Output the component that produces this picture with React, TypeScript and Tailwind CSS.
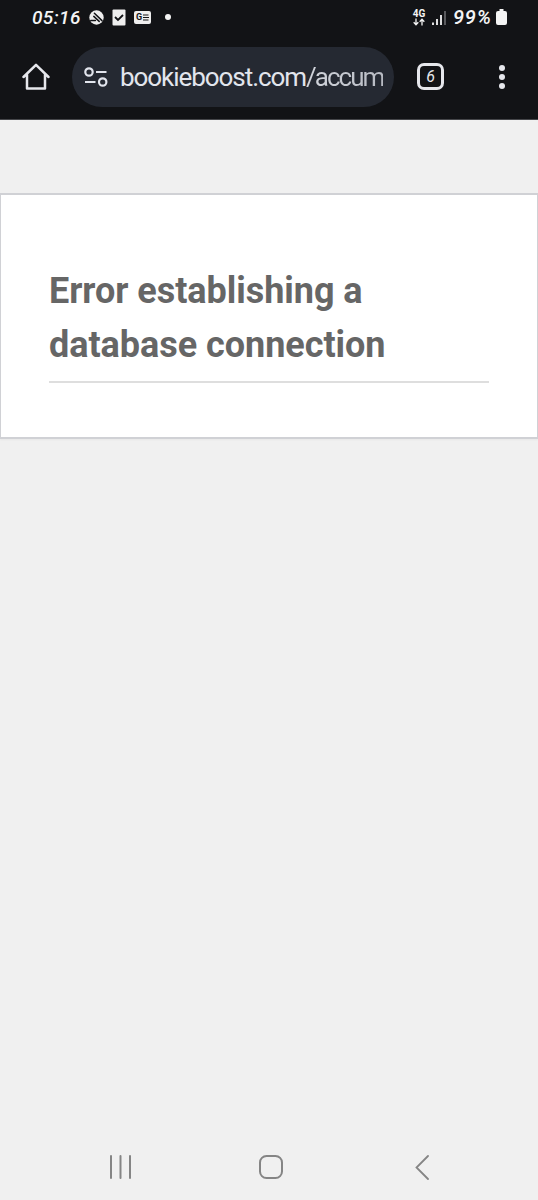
function StatusBar() {
    return (
        <div className="flex h-[34px] items-center pl-[32px] pr-[31px] text-[#f4f4f4]">
            <span className="w-[48px] whitespace-nowrap font-['Roboto',sans-serif] text-[19px] font-medium italic leading-none tracking-[0.4px]">
                05:16
            </span>
            <svg className="ml-[9px] shrink-0" width="15" height="15" viewBox="0 0 15 15">
                <circle cx="7.5" cy="7.5" r="7.2" fill="#eeeeee" />
                <path
                    d="M5.4 3.2 13 10.6M4.8 6.4l5.4 5M1.8 10.4h4.6"
                    fill="none"
                    stroke="#121316"
                    strokeWidth="1.5"
                    strokeLinecap="round"
                />
            </svg>
            <svg className="ml-[8px] shrink-0" width="14" height="17" viewBox="0 0 14 17">
                <rect x="0.5" y="0.5" width="13" height="16" rx="1" fill="#eeeeee" />
                <path d="m3 8 3 3 5-5" fill="none" stroke="#121316" strokeWidth="1.8" />
            </svg>
            <div className="ml-[8px] flex h-[13px] w-[17px] shrink-0 items-center justify-center gap-px rounded-[2px] bg-[#eeeeee]">
                <span className="font-['Roboto',sans-serif] text-[9px] font-bold leading-none text-[#121316]">G</span>
                <svg width="6" height="7" viewBox="0 0 6 7">
                    <path d="M0 1h5.5M0 3.5h6M0 6h5.5" stroke="#121316" strokeWidth="1.2" />
                </svg>
            </div>
            <div className="ml-[14px] size-[6px] shrink-0 rounded-full bg-[#f4f4f4]" />

            <div className="ml-auto flex w-[14px] flex-col items-center">
                <span className="font-['Roboto',sans-serif] text-[10px] font-bold leading-[9px]">4G</span>
                <svg width="12" height="8" viewBox="0 0 12 8">
                    <path
                        d="M3 0.5v6M0.7 4.3 3 6.8l2.3-2.5M9 7.5v-6M6.7 3.7 9 1.2l2.3 2.5"
                        fill="none"
                        stroke="#f4f4f4"
                        strokeWidth="1.3"
                    />
                </svg>
            </div>
            <svg className="ml-[6px] mt-px" width="14" height="16" viewBox="0 0 14 16">
                <path d="M1 12.5V15M5 9v6M9 5v10" stroke="#f4f4f4" strokeWidth="1.8" />
                <path d="M13 1v14" stroke="#6c6d70" strokeWidth="1.6" />
            </svg>
            <span className="ml-[7px] w-[42px] whitespace-nowrap font-['Roboto',sans-serif] text-[20px] font-medium italic leading-none tracking-[0.8px]">
                99%
            </span>
            <svg className="ml-px" width="11" height="16" viewBox="0 0 11 16">
                <path
                    d="M3.5 0h4v2H9a2 2 0 0 1 2 2v10a2 2 0 0 1-2 2H2a2 2 0 0 1-2-2V4a2 2 0 0 1 2-2h1.5z"
                    fill="#f4f4f4"
                />
            </svg>
        </div>
    );
}

function AddressBar() {
    return (
        <div className="flex h-[85px] items-center">
            <svg className="ml-[22px] shrink-0" width="28" height="28" viewBox="0 0 28 28">
                <path
                    d="M1.5 14 14 1.8 26.5 14M5 11.5V25.5H23V11.5"
                    fill="none"
                    stroke="#e6e7ec"
                    strokeWidth="2.5"
                    strokeLinejoin="round"
                    strokeLinecap="round"
                />
            </svg>
            <div className="ml-[22px] flex h-[60px] w-[322px] shrink-0 items-center rounded-full bg-[#252932] pl-[12px]">
                <svg className="shrink-0" width="24" height="20" viewBox="0 0 24 20">
                    <g fill="none" stroke="#e2e5ed" strokeWidth="2.2">
                        <circle cx="5" cy="5" r="3.7" />
                        <path d="M12 5h10.5M1 15h10.5" />
                        <circle cx="18.7" cy="15" r="3.7" />
                    </g>
                </svg>
                <div className="ml-[12px] w-[264px] overflow-hidden whitespace-nowrap font-['Roboto',sans-serif] text-[26px] leading-[36px] tracking-[-1.05px] text-[#e2e5ed]">
                    bookieboost.com
                    <span className="bg-gradient-to-r from-[#d3d6dd] to-[#b7bac2] bg-clip-text tracking-[-2px] text-transparent">
                        /accum
                    </span>
                </div>
            </div>
            <div className="ml-[23px] flex h-[27px] w-[27px] shrink-0 items-center justify-center rounded-[7px] border-3 border-[#e6e7ec] font-['Roboto',sans-serif] text-[16px] italic leading-none text-[#e6e7ec]">
                6
            </div>
            <div className="ml-[55px] flex flex-col gap-[3px]">
                <div className="size-[6px] rounded-full bg-[#e6e7ec]" />
                <div className="size-[6px] rounded-full bg-[#e6e7ec]" />
                <div className="size-[6px] rounded-full bg-[#e6e7ec]" />
            </div>
        </div>
    );
}

function NavigationBar() {
    return (
        <div className="mt-auto flex h-[45px] items-start text-[#858585]">
            <svg className="ml-[109px]" width="24" height="24" viewBox="0 0 24 24">
                <path d="M2 1v22M11.5 1v22M21 1v22" stroke="currentColor" strokeWidth="2" strokeLinecap="round" />
            </svg>
            <svg className="ml-[126px]" width="24" height="24" viewBox="0 0 24 24">
                <rect x="1" y="1" width="22" height="22" rx="6.5" fill="none" stroke="currentColor" strokeWidth="2" />
            </svg>
            <svg className="ml-[132px]" width="14" height="26" viewBox="0 0 14 26">
                <path d="M13 1 1.5 12.5 13 24" fill="none" stroke="currentColor" strokeWidth="1.8" strokeLinecap="round" />
            </svg>
        </div>
    );
}

export default function App() {
    return (
        <div className="flex h-[1200px] w-[538px] flex-col overflow-hidden bg-[#f0f0f0]">
            <header className="h-[120px] shrink-0 border-b border-[#45464a] bg-[#121316]">
                <StatusBar />
                <AddressBar />
            </header>
            <main className="mt-[73px] h-[246px] border-x border-y-2 border-[#d0d1d5] bg-white px-[48px] pt-[69px] shadow-[0_1px_2px_rgba(0,0,0,0.04)]">
                <h1 className="border-b-2 border-[#dedede] pb-[9px] font-['Roboto',sans-serif] text-[36px] font-bold leading-[54px] tracking-[-0.04px] text-[#666666]">
                    Error establishing a<br />
                    database connection
                </h1>
            </main>
            <NavigationBar />
        </div>
    );
}
